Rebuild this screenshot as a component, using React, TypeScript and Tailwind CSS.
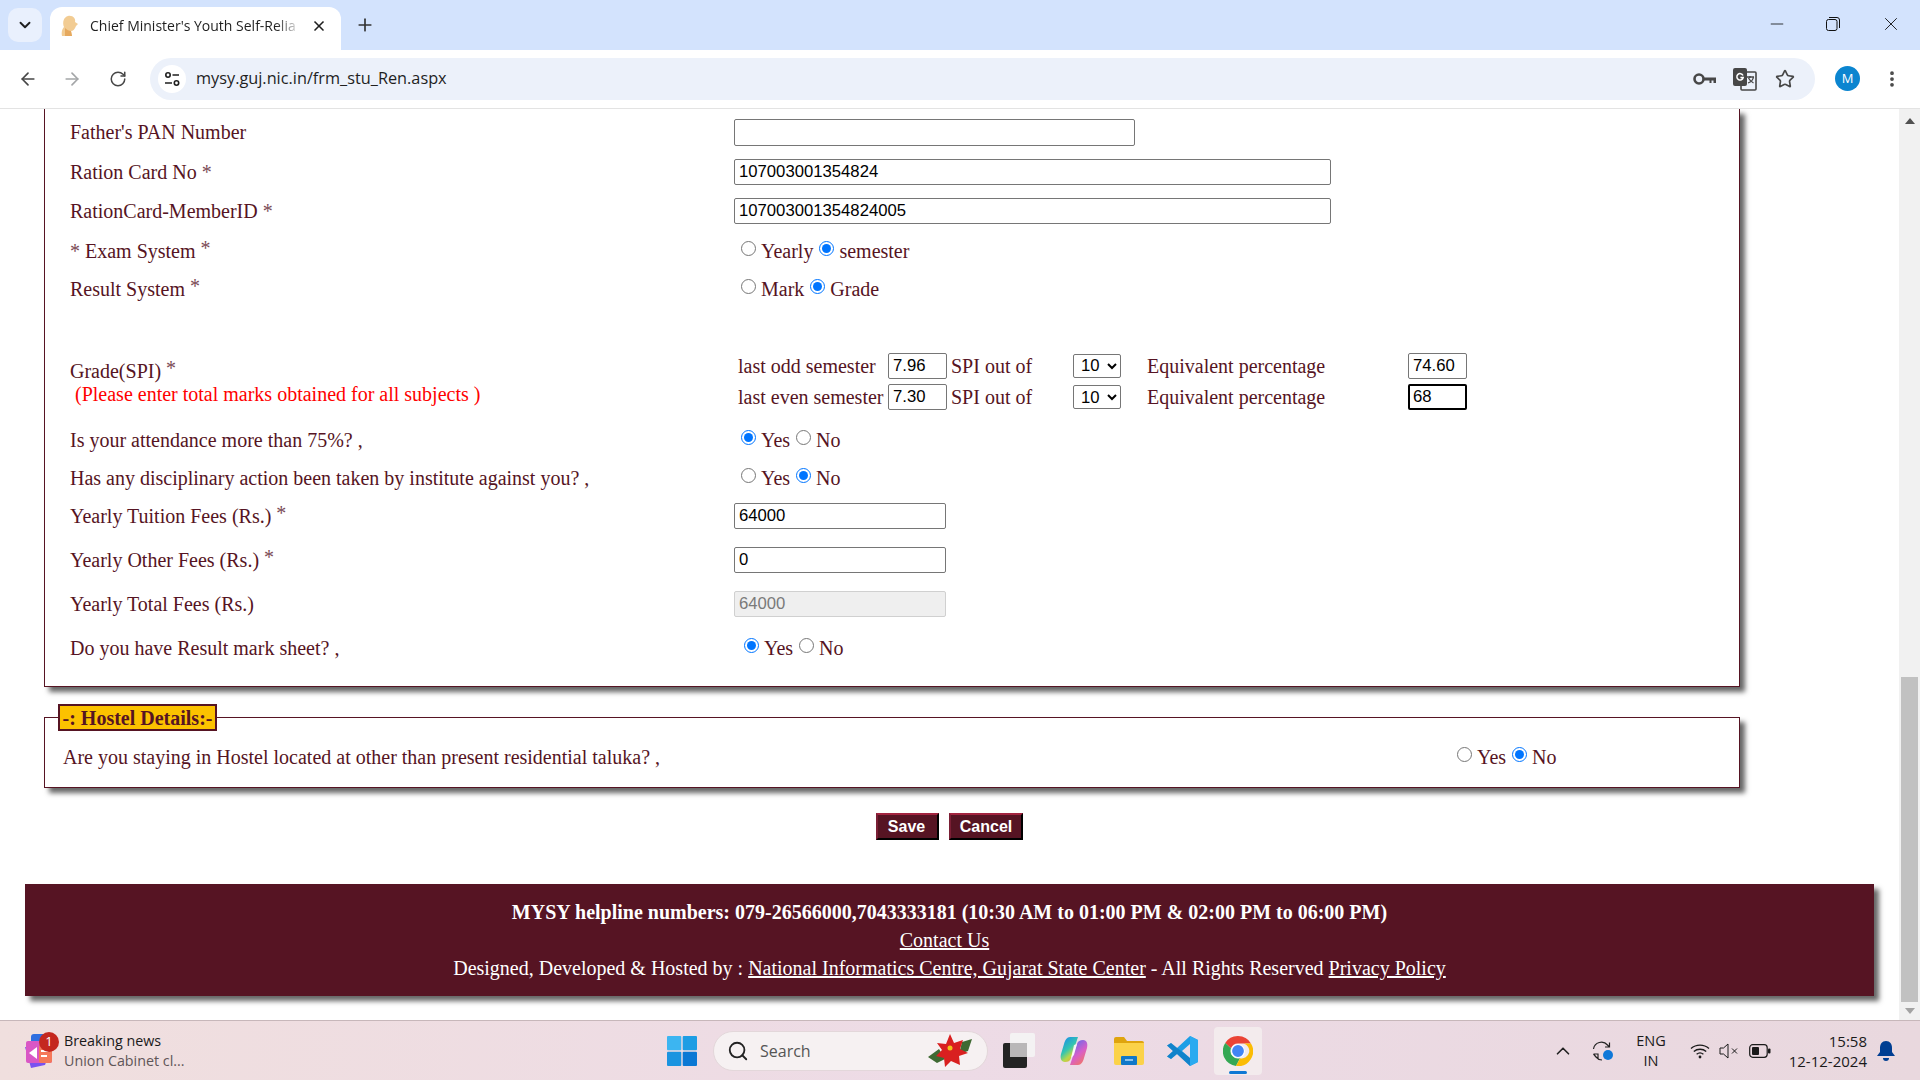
import React from "react";
import { ArrowLeft, ArrowRight, RotateCw, Star, X, Plus, ChevronDown, ChevronUp, EllipsisVertical, Search, Minus } from "lucide-react";

const Radio = ({ on, name }: { on?: boolean; name: string }) => (
  <input type="radio" name={name} defaultChecked={on} className="m-0 mb-[5px] h-[15px] w-[15px] shrink-0" />
);

const Star2 = () => <span className="relative -top-[3px] text-[#7a4a55]">*</span>;

const Row = ({ h, label, children }: { h: string; label: React.ReactNode; children?: React.ReactNode }) => (
  <div className={`flex items-center ${h}`}>
    <div className="w-[664px] shrink-0">{label}</div>
    <div className="flex items-center">{children}</div>
  </div>
);

const RadioPair = ({ a, b, on, name, ml = "ml-[7px]" }: { a: string; b: string; on: number; name: string; ml?: string }) => (
  <div className={`flex items-center ${ml}`}>
    <Radio name={name} on={on === 0} />
    <span className="ml-[5px]">{a}</span>
    <span className="ml-[6px] flex items-center">
      <Radio name={name} on={on === 1} />
      <span className="ml-[5px]">{b}</span>
    </span>
  </div>
);

const Field = ({ value, w, h = "h-[26px]", mode = "plain" }: { value: string; w: string; h?: string; mode?: "plain" | "focus" | "off" }) => {
  const look =
    mode === "focus"
      ? "border-[2px] border-black bg-white px-[3px] text-black"
      : mode === "off"
        ? "border border-[#d0d0d0] bg-[#efefef] px-[4px] text-[#7a7a7a]"
        : "border border-[#767676] bg-white px-[4px] text-black";
  return (
    <input
      readOnly
      value={value}
      className={`${w} ${h} rounded-[2px] font-['Liberation_Sans',sans-serif] text-[16.7px] outline-none ${look}`}
    />
  );
};

const Spi = ({ label, v1, v2, focus, h }: { label: string; v1: string; v2: string; focus?: boolean; h: string }) => (
  <div className={`flex items-center ${h}`}>
    <span className="ml-[4px] w-[150px] whitespace-nowrap">{label}</span>
    <Field value={v1} w="w-[59px]" />
    <span className="ml-[4px] w-[122px]">SPI out of</span>
    <select defaultValue="10" className="h-[24px] w-[48px] rounded-[2px] border border-[#767676] bg-white pl-[3px] font-['Liberation_Sans',sans-serif] text-[16.7px] text-black">
      <option>10</option>
    </select>
    <span className="ml-[26px] w-[261px]">Equivalent percentage</span>
    <Field value={v2} w="w-[59px]" mode={focus ? "focus" : "plain"} />
  </div>
);

const Translate = () => (
  <svg width="26" height="26" viewBox="0 0 26 26">
    <rect x="9" y="6" width="15" height="18" rx="1" fill="none" stroke="#474747" strokeWidth="1.6" />
    <rect x="1" y="2" width="14" height="18" rx="2" fill="#474747" />
    <path d="M11 9.5a3.2 3.2 0 1 0 .2 2H8.4" fill="none" stroke="#fff" strokeWidth="1.5" />
    <path d="M15 11h7M18 10v2M16 17c3-1 5-3 5.500-6M16.500 12c1 2 3 4 5 5" fill="none" stroke="#474747" strokeWidth="1.3" />
  </svg>
);

const Key = () => (
  <svg width="24" height="14" viewBox="0 0 24 14">
    <circle cx="6" cy="7" r="4.500" fill="none" stroke="#474747" strokeWidth="2.6" />
    <path d="M11 5.500h12v5.500h-2.500v-2.500h-2v2.500h-2v-2.500H11z" fill="#474747" />
  </svg>
);

const Tune = () => (
  <svg width="16" height="16" viewBox="0 0 16 16" fill="none" stroke="#1f1f1f" strokeWidth="1.6">
    <circle cx="4" cy="4" r="2.200" />
    <path d="M8.500 4H15M1 12h7" />
    <circle cx="12.500" cy="12" r="2.200" />
  </svg>
);

const Favicon = () => (
  <svg width="18" height="22" viewBox="0 0 18 22">
    <path d="M7 1c5-1 8 3 7 6l3 2-2 2c-1 3-3 5-5 5l1 5H1C0 16 2 13 3 12 1 7 3 2 7 1z" fill="#f2cc93" />
    <path d="M4 13c2 2 4 3 6 3l1 5H4z" fill="#e6a95e" />
  </svg>
);

const News = () => (
  <svg width="30" height="36" viewBox="0 0 30 36">
    <rect x="7" y="1" width="20" height="20" rx="3" fill="#2f6fe0" />
    <path d="M1 14l26 2-6 16-14 3z" fill="#7a52f0" />
    <rect x="2" y="8" width="26" height="22" rx="2" fill="#d957c5" />
    <rect x="15" y="12" width="13" height="18" rx="2" fill="#f5785a" />
    <path d="M5 20l8-6v12z" fill="#fff" />
    <path d="M17 18h8M17 23h6" stroke="#fff" strokeWidth="2" />
  </svg>
);

const WinLogo = () => (
  <svg width="30" height="30" viewBox="0 0 30 30">
    <rect x="0" y="0" width="14.300" height="14.300" rx="1" fill="#3cb5f1" />
    <rect x="15.700" y="0" width="14.300" height="14.300" rx="1" fill="#1d9de4" />
    <rect x="0" y="15.700" width="14.300" height="14.300" rx="1" fill="#1a94e0" />
    <rect x="15.700" y="15.700" width="14.300" height="14.300" rx="1" fill="#0b78d4" />
  </svg>
);

const Poinsettia = () => (
  <svg width="44" height="36" viewBox="0 0 44 36">
    <path d="M0 24l11-8 6 10-8 4zM44 6l-10 3-3 12 9-3z" fill="#3f6a33" />
    <path d="M22 1l4 9 9-3-3 9 8 4-9 3 1 9-9-4-6 6-1-9-8-2 6-6-5-7 9 1z" fill="#d92020" />
    <circle cx="22" cy="15" r="2.500" fill="#f2c21a" />
  </svg>
);

const TaskView = () => (
  <svg width="32" height="36" viewBox="0 0 32 36">
    <rect x="7" y="0" width="25" height="24" rx="2" fill="#f4f2f3" />
    <rect x="0" y="10" width="24" height="25" rx="2" fill="#232323" />
    <rect x="7" y="10" width="17" height="14" fill="#b9b7b8" />
  </svg>
);

const Copilot = () => (
  <svg width="28" height="30" viewBox="0 0 28 30">
    <defs>
      <linearGradient id="cp1" x1="0.2" y1="0" x2="0.8" y2="1">
        <stop offset="0" stopColor="#1a8fe8" />
        <stop offset="0.45" stopColor="#35c5b0" />
        <stop offset="0.7" stopColor="#b8d84a" />
        <stop offset="1" stopColor="#f2a43a" />
      </linearGradient>
      <linearGradient id="cp2" x1="0.2" y1="0" x2="0.8" y2="1">
        <stop offset="0" stopColor="#5a6cf0" />
        <stop offset="0.55" stopColor="#d85fc8" />
        <stop offset="1" stopColor="#f5785a" />
      </linearGradient>
    </defs>
    <path d="M10 1h8l-7 21c-1 3-3 4-6 4-4 0-5-4-4-8l3-10c1-4 3-7 6-7z" fill="url(#cp1)" />
    <path d="M18 29h-8l7-21c1-3 3-4 6-4 4 0 5 4 4 8l-3 10c-1 4-3 7-6 7z" fill="url(#cp2)" />
    <path d="M14 9l3-1-3 11-3 3z" fill="#fff" opacity="0.85" />
  </svg>
);

const Folder = () => (
  <svg width="30" height="28" viewBox="0 0 30 28">
    <path d="M0 2a2 2 0 0 1 2-2h8l3 4h15a2 2 0 0 1 2 2v4H0z" fill="#dfa40e" />
    <path d="M0 6h30v20a2 2 0 0 1-2 2H2a2 2 0 0 1-2-2z" fill="#fbd249" />
    <rect x="7" y="19" width="16" height="9" rx="1" fill="#0f78c8" />
    <path d="M11 23h8" stroke="#bfe3ff" strokeWidth="1.400" />
  </svg>
);

const VsCode = () => (
  <svg width="31" height="30" viewBox="0 0 31 30">
    <path d="M23 0L10 12 4 7 0 9.500l6 5.500-6 5.500L4 23l6-5 13 12 8-4V4zm0 8v14l-8-7z" fill="#1c9ee6" />
    <path d="M23 0l8 4v22l-8 4V22l0-14z" fill="#2aaaf0" />
    <path d="M0 9.500L4 7l19 15v8L10 18 4 23l-4-2.500L6 15z" fill="#0a6db5" opacity="0.55" />
  </svg>
);

const Chrome = () => (
  <svg width="30" height="30" viewBox="0 0 30 30">
    <path d="M15 0a15 15 0 0 1 13 7.500H15a7.500 7.500 0 0 0-7 4.800L2.200 7A15 15 0 0 1 15 0z" fill="#ea4335" />
    <path d="M2.200 7L8 12.300a7.500 7.500 0 0 0 9 9.900L13 30A15 15 0 0 1 2.200 7z" fill="#34a853" />
    <path d="M28 7.500A15 15 0 0 1 13 30l4-7.800a7.500 7.500 0 0 0 3.500-14.700z" fill="#fbbc04" />
    <circle cx="15" cy="15" r="6.500" fill="#4285f4" stroke="#fff" strokeWidth="1.200" />
  </svg>
);

const Sync = () => (
  <svg width="22" height="22" viewBox="0 0 22 22">
    <path d="M1.500 9a8 8 0 0 1 14-4l2 2M17.500 2.500V7H13M1.500 14H6v4.500M1.500 14l2.500 3a8 8 0 0 0 6 3" fill="none" stroke="#222" strokeWidth="1.200" />
    <circle cx="16" cy="15" r="5" fill="#0f78d8" />
  </svg>
);

const Wifi = () => (
  <svg width="20" height="16" viewBox="0 0 20 16" fill="none" stroke="#1a1a1a" strokeWidth="1.300">
    <path d="M1 5.500c5-4.500 13-4.500 18 0M3.800 8.500c3.500-3 9-3 12.400 0M6.600 11.300c2-1.600 4.800-1.600 6.800 0" />
    <circle cx="10" cy="14" r="1.400" fill="#1a1a1a" stroke="none" />
  </svg>
);

const Speaker = () => (
  <svg width="20" height="16" viewBox="0 0 20 16" fill="none" stroke="#1a1a1a" strokeWidth="1">
    <path d="M1 5v6h3.500L9 15V1L4.500 5zM13 5.500l5 5M18 5.500l-5 5" />
  </svg>
);

const Battery = () => (
  <svg width="22" height="14" viewBox="0 0 22 14">
    <rect x="0.700" y="0.700" width="17.500" height="12.600" rx="3" fill="none" stroke="#1a1a1a" strokeWidth="1.200" />
    <rect x="3" y="3" width="7" height="8" rx="1" fill="#1a1a1a" />
    <rect x="19" y="4.500" width="2.500" height="5" rx="1" fill="#1a1a1a" />
  </svg>
);

const Bell = () => (
  <svg width="18" height="22" viewBox="0 0 18 22">
    <path d="M9 1c-4 0-6 3-6 7v4l-3 4h18l-3-4V8c0-4-2-7-6-7z" fill="#003e92" />
    <path d="M6 18a3 3 0 0 0 6 0z" fill="#003e92" />
  </svg>
);

export default function App() {
  return (
    <div className="flex h-[1080px] w-[1920px] flex-col overflow-hidden bg-white font-['Liberation_Serif',serif] text-[20px] text-[#561423]">
      {/* Browser tab strip */}
      <div className="flex h-[50px] shrink-0 items-end bg-[#d3e3fd] pl-[8px]">
        <div className="mb-[8px] flex h-[34px] w-[34px] items-center justify-center rounded-[10px] bg-[#e9f0fd]">
          <ChevronDown size={18} strokeWidth={2.5} color="#1f1f1f" />
        </div>
        <div className="ml-[8px] flex h-[43px] w-[291px] items-center rounded-t-[12px] bg-white pb-[6px] pl-[11px] font-['Open_Sans',sans-serif] text-[14px] text-[#1f1f1f]">
          <Favicon />
          <span className="ml-[11px] h-[20px] w-[211px] whitespace-nowrap leading-[20px] [mask-image:linear-gradient(to_right,black_88%,transparent)]">Chief Minister's Youth Self-Relia</span>
          <X size={16} strokeWidth={2.500} className="ml-[10px]" color="#1f1f1f" />
        </div>
        <Plus size={20} strokeWidth={2} color="#333" className="mb-[15px] ml-[14px]" />
        <div className="mb-[15px] ml-auto flex items-center">
          <Minus size={20} strokeWidth={1} color="#111" />
          <svg width="14" height="14" viewBox="0 0 14 14" fill="none" stroke="#111" strokeWidth="1" className="ml-[39px]">
            <rect x="0.500" y="2.500" width="10.500" height="11" rx="2" />
            <path d="M3 .5h8a2.500 2.500 0 0 1 2.500 2.500v8" />
          </svg>
          <X size={22} strokeWidth={1} color="#111" className="ml-[40px] mr-[18px]" />
        </div>
      </div>

      {/* Browser toolbar */}
      <div className="flex h-[59px] shrink-0 items-center border-b border-[#e3e3e3] bg-white pb-[1px]">
        <ArrowLeft size={20} strokeWidth={2} color="#474747" className="ml-[18px]" />
        <ArrowRight size={20} strokeWidth={2} color="#a4a6a8" className="ml-[24px]" />
        <RotateCw size={18} strokeWidth={2} color="#474747" className="ml-[27px]" />
        <div className="ml-[23px] flex h-[42px] w-[1665px] items-center rounded-full bg-[#ecf1fa] pl-[8px] pr-[20px]">
          <div className="flex h-[28px] w-[28px] items-center justify-center rounded-full bg-white">
            <Tune />
          </div>
          <span className="ml-[10px] font-['Open_Sans',sans-serif] text-[16.300px] text-[#1f1f1f]">mysy.guj.nic.in/frm_stu_Ren.aspx</span>
          <div className="ml-auto flex items-center">
            <Key />
            <span className="ml-[15px]"><Translate /></span>
            <Star size={20} strokeWidth={2} color="#474747" className="ml-[17px]" />
          </div>
        </div>
        <div className="ml-[20px] flex h-[25px] w-[25px] items-center justify-center rounded-full bg-[#0b85d0] font-['Open_Sans',sans-serif] text-[13px] text-white">M</div>
        <EllipsisVertical size={20} strokeWidth={2.500} color="#474747" className="ml-[22px]" />
      </div>

      {/* Viewport */}
      <div className="flex h-[911px] shrink-0">
        <div className="w-[1899px] shrink-0 overflow-hidden">
          {/* Form panel */}
          <div className="ml-[44px] w-[1696px] border-x border-b border-[#561423] pb-[13px] pl-[25px] pt-[3px] shadow-[5px_5px_5px_#666]">
            <Row h="h-[40px]" label="Father's PAN Number">
              <Field value="" w="w-[401px]" h="h-[27px]" />
            </Row>
            <Row h="h-[39px]" label={<>Ration Card No <span className="text-[#7a4a55]">*</span></>}>
              <Field value="107003001354824" w="w-[597px]" />
            </Row>
            <Row h="h-[40px]" label={<>RationCard-MemberID <span className="text-[#7a4a55]">*</span></>}>
              <Field value="107003001354824005" w="w-[597px]" />
            </Row>
            <Row h="h-[39px]" label={<><span className="text-[#7a4a55]">*</span> Exam System <Star2 /></>}>
              <RadioPair name="exam" a="Yearly" b="semester" on={1} />
            </Row>
            <Row h="h-[38px]" label={<>Result System <Star2 /></>}>
              <RadioPair name="result" a="Mark" b="Grade" on={1} />
            </Row>
            <div className="mt-[42px] flex h-[63px]">
              <div className="w-[664px] shrink-0 pt-[10px] leading-[22px]">
                <div>Grade(SPI) <Star2 /></div>
                <div className="ml-[5px] mt-[1px] text-[#ff0000]">(Please enter total marks obtained for all subjects )</div>
              </div>
              <div>
                <Spi h="h-[31px]" label="last odd semester" v1="7.96" v2="74.60" />
                <Spi h="h-[32px]" label="last even semester" v1="7.30" v2="68" focus />
              </div>
            </div>
            <div className="mt-[8px]">
              <Row h="h-[38px]" label="Is your attendance more than 75%? ,">
                <RadioPair name="att" a="Yes" b="No" on={0} />
              </Row>
              <Row h="h-[38px]" label="Has any disciplinary action been taken by institute against you? ,">
                <RadioPair name="dis" a="Yes" b="No" on={1} />
              </Row>
              <Row h="h-[38px]" label={<>Yearly Tuition Fees (Rs.) <Star2 /></>}>
                <Field value="64000" w="w-[212px]" />
              </Row>
              <Row h="h-[50px]" label={<>Yearly Other Fees (Rs.) <Star2 /></>}>
                <Field value="0" w="w-[212px]" />
              </Row>
              <Row h="h-[38px]" label="Yearly Total Fees (Rs.)">
                <Field value="64000" w="w-[212px]" mode="off" />
              </Row>
              <Row h="h-[50px]" label="Do you have Result mark sheet? ,">
                <RadioPair name="sheet" a="Yes" b="No" on={0} ml="ml-[10px]" />
              </Row>
            </div>
          </div>

          {/* Hostel panel */}
          <div className="relative ml-[44px] mt-[30px] h-[71px] w-[1696px] border border-[#561423] pl-[18px] shadow-[5px_5px_5px_#666]">
            <div className="absolute -top-[14px] left-[13px] flex h-[27px] w-[159px] items-center justify-center whitespace-nowrap border-[2px] border-[#561423] bg-[#fcc200] font-bold">-: Hostel Details:-</div>
            <div className="flex h-full items-center pt-[8px]">
              <span className="w-[1387px] shrink-0">Are you staying in Hostel located at other than present residential taluka? ,</span>
              <RadioPair name="hostel" a="Yes" b="No" on={1} />
            </div>
          </div>

          {/* Buttons */}
          <div className="ml-[876px] mt-[25px] flex gap-[10px] font-['Liberation_Sans',sans-serif] text-[16px] font-bold text-white">
            <button className="h-[27px] w-[63px] border-[2px] border-b-black border-l-[#7a1f35] border-r-black border-t-[#a3243f] bg-[#561423] pb-[1px] pr-[2px]">Save</button>
            <button className="h-[27px] w-[74px] border-[2px] border-b-black border-l-[#7a1f35] border-r-black border-t-[#a3243f] bg-[#561423] pb-[1px]">Cancel</button>
          </div>

          {/* Footer */}
          <div className="ml-[25px] mt-[44px] flex h-[112px] w-[1849px] flex-col items-center justify-center bg-[#561423] leading-[28px] text-white shadow-[5px_5px_5px_#666]">
            <div className="font-bold">MYSY helpline numbers: 079-26566000,7043333181 (10:30 AM to 01:00 PM &amp; 02:00 PM to 06:00 PM)</div>
            <a className="pr-[10px] underline">Contact Us</a>
            <div>
              Designed, Developed &amp; Hosted by : <a className="underline">National Informatics Centre, Gujarat State Center</a> - All Rights Reserved <a className="underline">Privacy Policy</a>
            </div>
          </div>
        </div>

        {/* Scrollbar */}
        <div className="flex w-[21px] shrink-0 flex-col items-center bg-[#f1f1f1]">
          <div className="mt-[9px] h-0 w-0 border-x-[5px] border-b-[6px] border-x-transparent border-b-[#505050]" />
          <div className="mt-[553px] h-[325px] w-[17px] bg-[#c1c1c1]" />
          <div className="mt-[6px] h-0 w-0 border-x-[5px] border-t-[6px] border-x-transparent border-t-[#a3a3a3]" />
        </div>
      </div>

      {/* Windows taskbar */}
      <div className="flex h-[60px] shrink-0 items-center border-t border-[#c7b7ba] bg-gradient-to-r from-[#f0dfde] via-[#eddbe6] to-[#e9d8de] font-['Open_Sans',sans-serif]">
        <div className="relative ml-[24px] flex h-[36px] w-[30px] items-center">
          <News />
          <div className="absolute -top-[1px] right-[-5px] flex h-[20px] w-[20px] items-center justify-center rounded-full bg-[#c4271f] text-[13px] text-white">1</div>
        </div>
        <div className="ml-[10px] w-[603px] text-[14.300px] leading-[20px]">
          <div className="text-[#1a1a1a]">Breaking news</div>
          <div className="text-[#5f5658]">Union Cabinet cl...</div>
        </div>
        <WinLogo />
        <div className="ml-[16px] flex h-[40px] w-[275px] items-center rounded-full border border-[#e3d7da] bg-[#f6f1f2] pl-[13px] pr-[15px] text-[16px] text-[#555]">
          <Search size={22} strokeWidth={2} color="#222" />
          <span className="ml-[11px]">Search</span>
          <span className="ml-auto"><Poinsettia /></span>
        </div>
        <div className="ml-[15px]"><TaskView /></div>
        <div className="ml-[25px]"><Copilot /></div>
        <div className="ml-[26px]"><Folder /></div>
        <div className="ml-[23px]"><VsCode /></div>
        <div className="relative ml-[16px] flex h-[48px] w-[48px] items-center justify-center rounded-[4px] bg-[#f3ebed]">
          <Chrome />
          <div className="absolute bottom-[1px] left-[15px] h-[3px] w-[18px] rounded-full bg-[#0f78d4]" />
        </div>
        <ChevronUp size={22} strokeWidth={1.800} color="#222" className="ml-[290px]" />
        <div className="ml-[18px]"><Sync /></div>
        <div className="ml-[19px] w-[36px] text-center text-[14.500px] leading-[20px] text-[#1a1a1a]">ENG<br />IN</div>
        <div className="ml-[21px]"><Wifi /></div>
        <div className="ml-[9px]"><Speaker /></div>
        <div className="ml-[10px]"><Battery /></div>
        <div className="ml-[6px] w-[90px] text-right text-[15px] leading-[20px] text-[#1a1a1a]">15:58<br />12-12-2024</div>
        <div className="ml-[10px]"><Bell /></div>
      </div>
    </div>
  );
}
